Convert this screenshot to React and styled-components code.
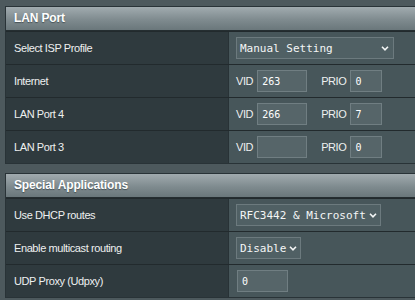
import styled, { createGlobalStyle } from "styled-components";

const GlobalStyle = createGlobalStyle`
  html, body {
    margin: 0;
    padding: 0;
    background-color: #4d595d;
    overflow: hidden;
  }
  body {
    font-family: "Liberation Sans", Arial, sans-serif;
  }
`;

const Page = styled.div`
  width: 415px;
  box-sizing: border-box;
  overflow: hidden;
  padding: 6px 0 0 5px;
  display: flex;
  flex-direction: column;
  gap: 9px;
`;

const Panel = styled.div`
  flex-shrink: 0;
  width: 420px;
  border: 1px solid #293337;
  display: flex;
  flex-direction: column;
`;

const Header = styled.div`
  height: 23px;
  line-height: 23px;
  padding-left: 8px;
  background: linear-gradient(to bottom, #a1abaf 0%, #7f8b8f 55%, #6a777b 100%);
  border-bottom: 1px solid #252e31;
  color: #ffffff;
  font-size: 12px;
  font-weight: 700;
  letter-spacing: -0.15px;
  text-shadow: 0 1px 1px rgba(30, 40, 44, 0.55);
`;

const Row = styled.div`
  display: grid;
  grid-template-columns: 222px 1fr;
  height: 32px;
  border-top: 1px solid #222a2d;

  &:first-of-type {
    border-top: none;
  }
`;

const Label = styled.div`
  background-color: #2f3a3e;
  padding-left: 8px;
  display: flex;
  align-items: center;
  color: #eef0f0;
  font-size: 11px;
  letter-spacing: -0.4px;
`;

const Value = styled.div`
  background-color: #47565a;
  border-left: 1px solid #283236;
  padding-left: 7px;
  display: flex;
  align-items: center;
`;

const FieldName = styled.span`
  color: #eef0f0;
  font-size: 11px;
  letter-spacing: -0.4px;
  margin-left: ${(p) => p.$gap || 0}px;
`;

const Input = styled.div`
  box-sizing: border-box;
  width: ${(p) => p.$w}px;
  height: 22px;
  margin-left: ${(p) => (p.$ml === undefined ? 4 : p.$ml)}px;
  padding-left: 4px;
  background-color: #566569;
  border: 1px solid #707e82;
  color: #ffffff;
  font-family: "DejaVu Sans Mono", monospace;
  font-size: 10px;
  display: flex;
  align-items: center;
`;

const Select = styled.div`
  box-sizing: border-box;
  width: ${(p) => p.$w}px;
  height: 22px;
  padding: 0 4px 0 3px;
  background-color: #506064;
  border: 1px solid #6c7a7e;
  color: #f4f6f6;
  font-family: "DejaVu Sans Mono", monospace;
  font-size: 11px;
  display: flex;
  align-items: center;
  gap: 3px;
  white-space: nowrap;
  overflow: hidden;

  svg {
    margin-left: auto;
    flex-shrink: 0;
  }
`;

const Chevron = () => (
  <svg width="8" height="5" viewBox="0 0 8 5">
    <path d="M1 0.8 L4 3.8 L7 0.8" fill="none" stroke="#f4f6f6" strokeWidth="1.6" />
  </svg>
);

const VlanRow = ({ name, vid, prio }) => (
  <Row>
    <Label>{name}</Label>
    <Value>
      <FieldName>VID</FieldName>
      <Input $w={50}>{vid}</Input>
      <FieldName $gap={14}>PRIO</FieldName>
      <Input $w={32}>{prio}</Input>
    </Value>
  </Row>
);

export default function App() {
  return (
    <>
      <GlobalStyle />
      <Page>
        <Panel>
          <Header>LAN Port</Header>
          <Row>
            <Label>Select ISP Profile</Label>
            <Value>
              <Select $w={158}>
                Manual Setting
                <Chevron />
              </Select>
            </Value>
          </Row>
          <VlanRow name="Internet" vid="263" prio="0" />
          <VlanRow name="LAN Port 4" vid="266" prio="7" />
          <VlanRow name="LAN Port 3" vid="" prio="0" />
        </Panel>
        <Panel>
          <Header>Special Applications</Header>
          <Row>
            <Label>Use DHCP routes</Label>
            <Value>
              <Select $w={145}>
                RFC3442 &amp; Microsoft
                <Chevron />
              </Select>
            </Value>
          </Row>
          <Row>
            <Label>Enable multicast routing</Label>
            <Value>
              <Select $w={65}>
                Disable
                <Chevron />
              </Select>
            </Value>
          </Row>
          <Row>
            <Label>UDP Proxy (Udpxy)</Label>
            <Value>
              <Input $w={51} $ml={1}>0</Input>
            </Value>
          </Row>
        </Panel>
      </Page>
    </>
  );
}
